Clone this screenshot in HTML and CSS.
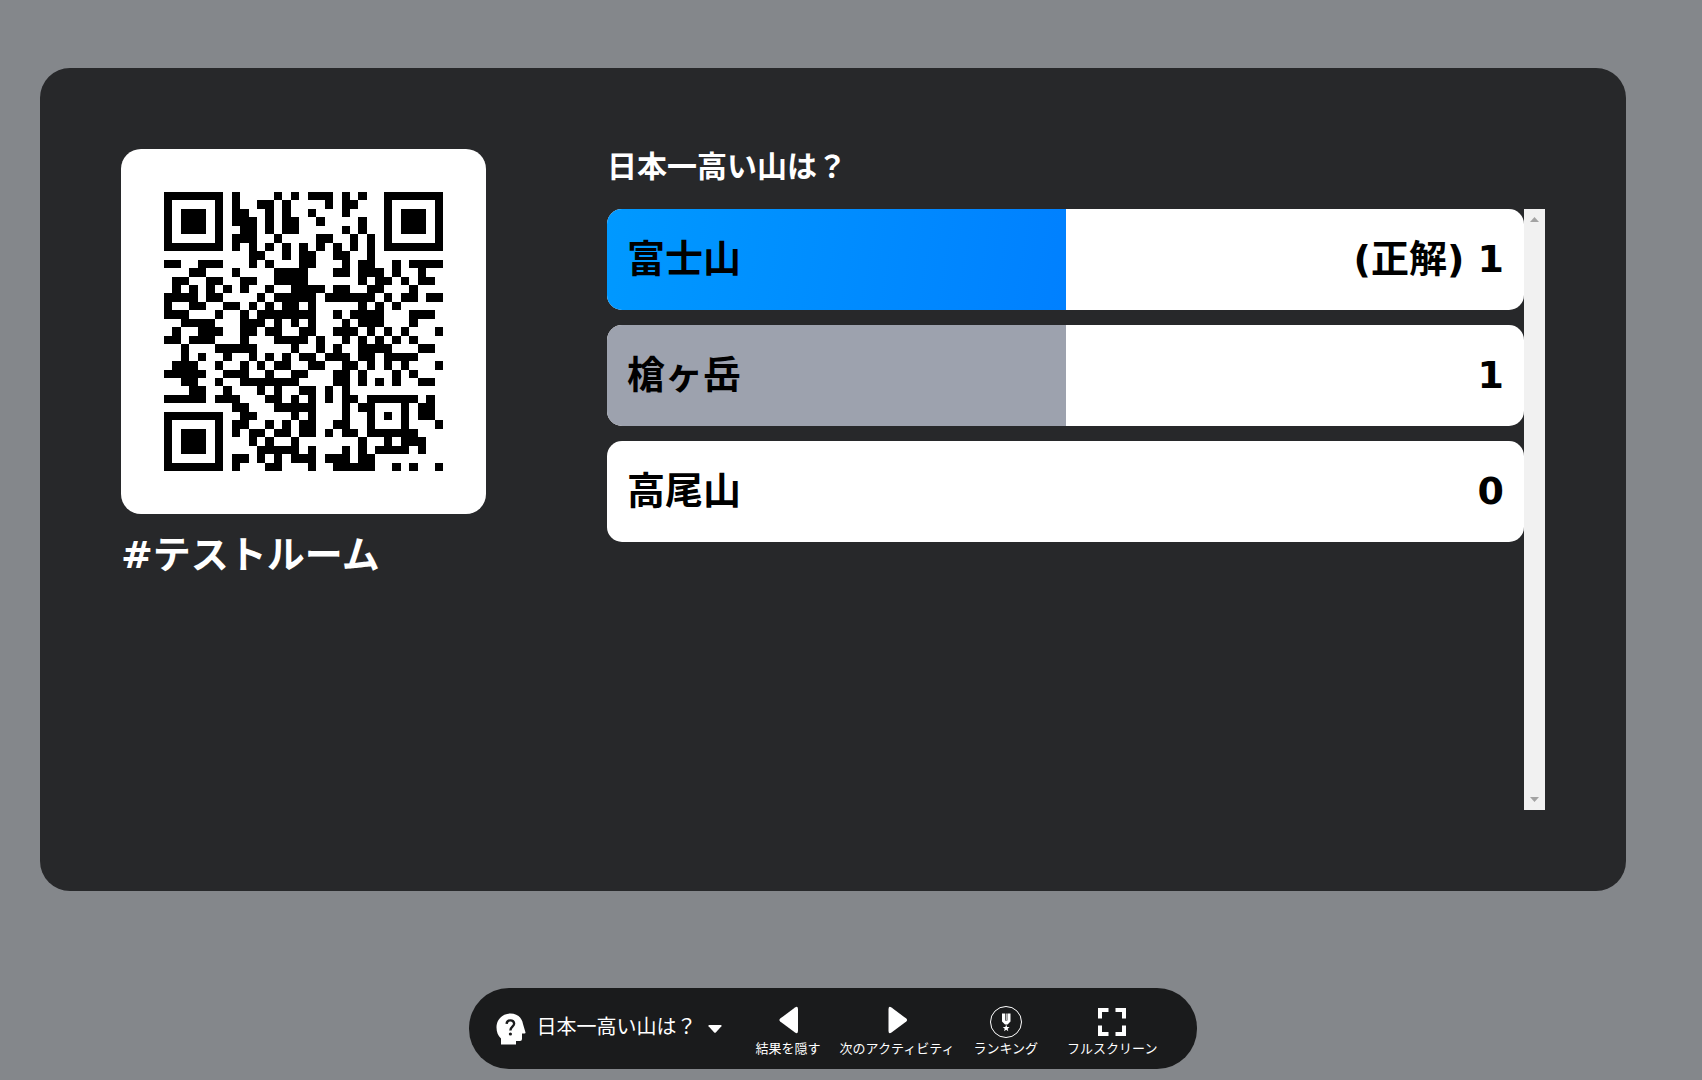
FILE: index.html
```html
<!DOCTYPE html>
<html lang="ja">
<head>
  <meta charset="UTF-8">
  <title>テストルーム</title>
  <link rel="stylesheet" href="styles.css">
</head>
<body>
  <main class="panel">
    <section class="room">
      <div class="qr-box">
        <svg class="qr" viewBox="0 0 33 33" shape-rendering="crispEdges" role="img" aria-label="QR">
          <path transform="translate(0 .5)" stroke="#000" stroke-width="1" fill="none" d="
            M0 0h7M8 0h1M13 0h1M15 0h1M17 0h3M21 0h1M23 0h1M26 0h7
            M0 1h1M6 1h1M8 1h1M11 1h2M14 1h1M19 1h1M21 1h2M26 1h1M32 1h1
            M0 2h1M2 2h3M6 2h1M8 2h2M12 2h1M14 2h1M17 2h1M21 2h1M26 2h1M28 2h3M32 2h1
            M0 3h1M2 3h3M6 3h1M8 3h3M12 3h1M14 3h2M18 3h1M23 3h1M26 3h1M28 3h3M32 3h1
            M0 4h1M2 4h3M6 4h1M9 4h2M12 4h1M14 4h2M21 4h1M23 4h1M26 4h1M28 4h3M32 4h1
            M0 5h1M6 5h1M8 5h3M13 5h1M18 5h2M22 5h1M24 5h1M26 5h1M32 5h1
            M0 6h7M8 6h1M10 6h1M12 6h1M14 6h1M16 6h1M18 6h1M20 6h1M22 6h1M24 6h1M26 6h7
            M10 7h2M14 7h1M16 7h2M20 7h2M24 7h1
            M0 8h2M4 8h3M10 8h1M12 8h1M16 8h2M21 8h1M23 8h2M27 8h1M29 8h4
            M3 9h2M8 9h1M13 9h4M20 9h2M23 9h3M27 9h1M30 9h1
            M1 10h2M5 10h2M9 10h2M13 10h4M23 10h1M25 10h2M28 10h1M30 10h2
            M1 11h1M3 11h1M5 11h1M7 11h1M9 11h1M12 11h1M15 11h4M20 11h2M24 11h2M29 11h1
            M0 12h4M5 12h2M11 12h1M13 12h5M19 12h6M26 12h1M28 12h2M31 12h2
            M0 13h1M3 13h2M7 13h2M10 13h1M12 13h1M14 13h2M17 13h1M23 13h1M25 13h1M27 13h1
            M0 14h3M6 14h1M9 14h1M11 14h7M20 14h1M22 14h4M29 14h3
            M2 15h4M9 15h3M13 15h1M15 15h1M17 15h1M21 15h1M23 15h3M29 15h1
            M1 16h1M4 16h3M9 16h2M12 16h2M16 16h2M20 16h3M24 16h1M26 16h1M28 16h1M32 16h1
            M0 17h2M3 17h3M9 17h1M13 17h4M18 17h1M21 17h1M23 17h1M25 17h1M27 17h1M29 17h1
            M2 18h1M6 18h5M15 18h1M18 18h1M20 18h1M23 18h4M30 18h2
            M2 19h1M4 19h1M7 19h1M10 19h1M12 19h1M14 19h1M16 19h2M19 19h3M23 19h2M26 19h4
            M1 20h3M6 20h1M9 20h1M11 20h1M13 20h2M17 20h2M21 20h2M24 20h1M26 20h1M28 20h1M32 20h1
            M0 21h5M7 21h3M12 21h1M15 21h2M20 21h2M23 21h1M27 21h1M29 21h1
            M2 22h2M6 22h1M9 22h7M20 22h2M23 22h1M25 22h1M27 22h1M30 22h2
            M3 23h2M7 23h1M11 23h1M13 23h1M16 23h2M19 23h1M21 23h1
            M0 24h5M6 24h3M12 24h2M15 24h1M17 24h1M19 24h1M21 24h2M24 24h6M31 24h1
            M8 25h2M13 25h5M21 25h1M23 25h2M28 25h1M30 25h2
            M0 26h7M9 26h2M15 26h1M17 26h1M21 26h1M24 26h1M26 26h1M28 26h1M30 26h2
            M0 27h1M6 27h1M8 27h2M12 27h1M14 27h1M16 27h2M20 27h2M24 27h1M28 27h1M32 27h1
            M0 28h1M2 28h3M6 28h1M8 28h1M10 28h2M13 28h2M16 28h2M19 28h1M21 28h2M24 28h6
            M0 29h1M2 29h3M6 29h1M10 29h1M12 29h1M15 29h1M23 29h1M26 29h1M28 29h3
            M0 30h1M2 30h3M6 30h1M11 30h5M17 30h1M21 30h1M23 30h1M25 30h4M30 30h1
            M0 31h1M6 31h1M8 31h2M11 31h1M13 31h1M15 31h3M19 31h3M23 31h2
            M0 32h7M8 32h1M12 32h2M17 32h1M20 32h5M27 32h1M29 32h1M32 32h1"/>
        </svg>
      </div>
      <h1 class="room-name">#テストルーム</h1>
    </section>

    <section class="quiz">
      <h2 class="question">日本一高い山は？</h2>
      <div class="results">
        <ul class="answers">
          <li class="answer">
            <div class="bar correct" style="width: 50%"></div>
            <span class="label">富士山</span>
            <span class="count">(正解) 1</span>
          </li>
          <li class="answer">
            <div class="bar" style="width: 50%"></div>
            <span class="label">槍ヶ岳</span>
            <span class="count">1</span>
          </li>
          <li class="answer">
            <div class="bar" style="width: 0%"></div>
            <span class="label">高尾山</span>
            <span class="count">0</span>
          </li>
        </ul>
        <div class="scrollbar">
          <svg width="9" height="5" viewBox="0 0 9 5"><path d="M0 5L4.500 0L9 5z" fill="#a3a3a3"/></svg>
          <svg width="9" height="5" viewBox="0 0 9 5"><path d="M0 0L4.500 5L9 0z" fill="#a3a3a3"/></svg>
        </div>
      </div>
    </section>
  </main>

  <nav class="toolbar">
    <div class="activity">
      <svg class="head-icon" viewBox="0 0 30 32">
        <path fill="#fff" d="M14.500 0.500C21 0.500 26 4.500 27 11L29.500 19.500Q29.700 20.500 28.500 20.500H26V26Q26 28 24 28H20V31.500H5V25.500C2 23 0.500 19 0.500 14.500C0.500 6.500 6.500 0.500 14.500 0.500z"/>
        <path fill="none" stroke="#1a1b1c" stroke-width="2.400" d="M10.600 10.800C11 6.200 18.300 6.300 18.100 10.800C18 13.700 14.400 13.800 14.400 17.500"/>
        <circle cx="14.400" cy="21" r="1.600" fill="#1a1b1c"/>
      </svg>
      <select class="activity-select" aria-label="アクティビティ">
        <option>日本一高い山は？</option>
      </select>
      <svg class="caret" viewBox="0 0 14 8"><path fill="#fff" d="M1 0H13Q14 0.300 13.400 1.200L7.800 7.400Q7 8 6.200 7.400L0.600 1.200Q0 0.300 1 0z"/></svg>
    </div>
    <button class="tool" type="button">
      <svg class="icon" viewBox="0 0 32 32"><path fill="#fff" d="M26 3V25Q25.800 28.500 23 26.500L8.200 15.400Q6.600 14 8.200 12.600L23 1.500Q25.800 -0.500 26 3z"/></svg>
      結果を隠す
    </button>
    <button class="tool" type="button">
      <svg class="icon" viewBox="0 0 32 32"><path fill="#fff" d="M7.500 3V25Q7.700 28.500 10.500 26.500L25.300 15.400Q26.900 14 25.300 12.600L10.500 1.500Q7.700 -0.500 7.500 3z"/></svg>
      次のアクティビティ
    </button>
    <button class="tool" type="button">
      <svg class="icon" viewBox="0 0 32 32">
        <circle cx="16" cy="16" r="15.500" fill="none" stroke="#fff"/>
        <path fill="#fff" d="M12 7.500H15V14.500H17.400V7.500H20.500V15.500L17.500 18.500H15L12 15.500z"/>
        <path fill="#fff" d="M15.700 7.500H16.700V14H15.700z"/>
        <path fill="#fff" d="M16.200 18.500L17.100 21L19.600 21.100L17.700 22.700L18.300 25.200L16.200 23.800L14.100 25.200L14.700 22.700L12.800 21.100L15.300 21z"/>
      </svg>
      ランキング
    </button>
    <button class="tool fullscreen" type="button">
      <svg class="icon" viewBox="0 0 32 32"><path fill="none" stroke="#fff" stroke-width="4" d="M4 12.500V4H12.500M19.500 4H28V12.500M28 19.500V28H19.500M12.500 28H4V19.500"/></svg>
      フルスクリーン
    </button>
  </nav>
</body>
</html>
```
FILE: styles.css
```css
* {
  box-sizing: border-box;
}

body {
  margin: 0;
  min-height: 100vh;
  padding: 68px 76px 11px 40px;
  display: flex;
  flex-direction: column;
  align-items: center;
  background-color: #84878b;
  color: #fff;
  font-family: "DejaVu Sans", "Noto Sans CJK JP", sans-serif;
}

.panel {
  flex: 1;
  width: 100%;
  margin-bottom: 97px;
  padding: 81px;
  display: grid;
  grid-template-columns: 365px 1fr;
  gap: 121px;
  background-color: #27282a;
  border-radius: 30px;
}

.qr-box {
  padding: 43px;
  background-color: #fff;
  border-radius: 20px;
}

.qr {
  display: block;
  width: 100%;
}

.room-name {
  margin: 11px 0 0;
  font-size: 38px;
  line-height: 60px;
}

.quiz {
  display: flex;
  flex-direction: column;
}

.question {
  margin: 0 0 24px;
  font-size: 30px;
  line-height: 36px;
}

.results {
  flex: 1;
  display: flex;
}

.answers {
  flex: 1;
  margin: 0;
  padding: 0;
  list-style: none;
  display: flex;
  flex-direction: column;
  gap: 15px;
}

.answer {
  position: relative;
  height: 101px;
  padding: 0 20px 2px;
  display: flex;
  align-items: center;
  justify-content: space-between;
  overflow: hidden;
  background-color: #fff;
  border-radius: 15px;
  color: #000;
  font-size: 38px;
  font-weight: bold;
  line-height: 60px;
}

/* vote share, drawn behind the answer text */
.bar {
  position: absolute;
  top: 0;
  left: 0;
  height: 100%;
  background-color: #9da2ae;
}

.bar.correct {
  background: linear-gradient(100deg, #0099ff, #0080ff);
}

.label,
.count {
  position: relative;
}

.scrollbar {
  width: 21px;
  padding: 8px 0;
  display: flex;
  flex-direction: column;
  align-items: center;
  justify-content: space-between;
  background-color: #f1f1f1;
}

.toolbar {
  height: 81px;
  padding: 0 40px 0 27px;
  display: flex;
  align-items: center;
  gap: 19px;
  background-color: #1a1b1c;
  border-radius: 40px;
}

.activity {
  margin-right: 15px;
  display: flex;
  align-items: center;
}

.head-icon {
  width: 30px;
  height: 32px;
}

.activity-select {
  appearance: none;
  margin: 0 11px;
  padding: 0 0 3px;
  border: none;
  background: none;
  color: #fff;
  font-family: inherit;
  font-size: 20px;
  line-height: 30px;
}

.caret {
  width: 14px;
  height: 8px;
}

.tool {
  padding: 8px 0 0;
  display: flex;
  flex-direction: column;
  align-items: center;
  gap: 1px;
  border: none;
  background: none;
  color: #fff;
  font-family: inherit;
  font-size: 13px;
  line-height: 20px;
  cursor: pointer;
}

.fullscreen {
  margin-left: 10px;
}

.icon {
  width: 32px;
  height: 32px;
}
```
